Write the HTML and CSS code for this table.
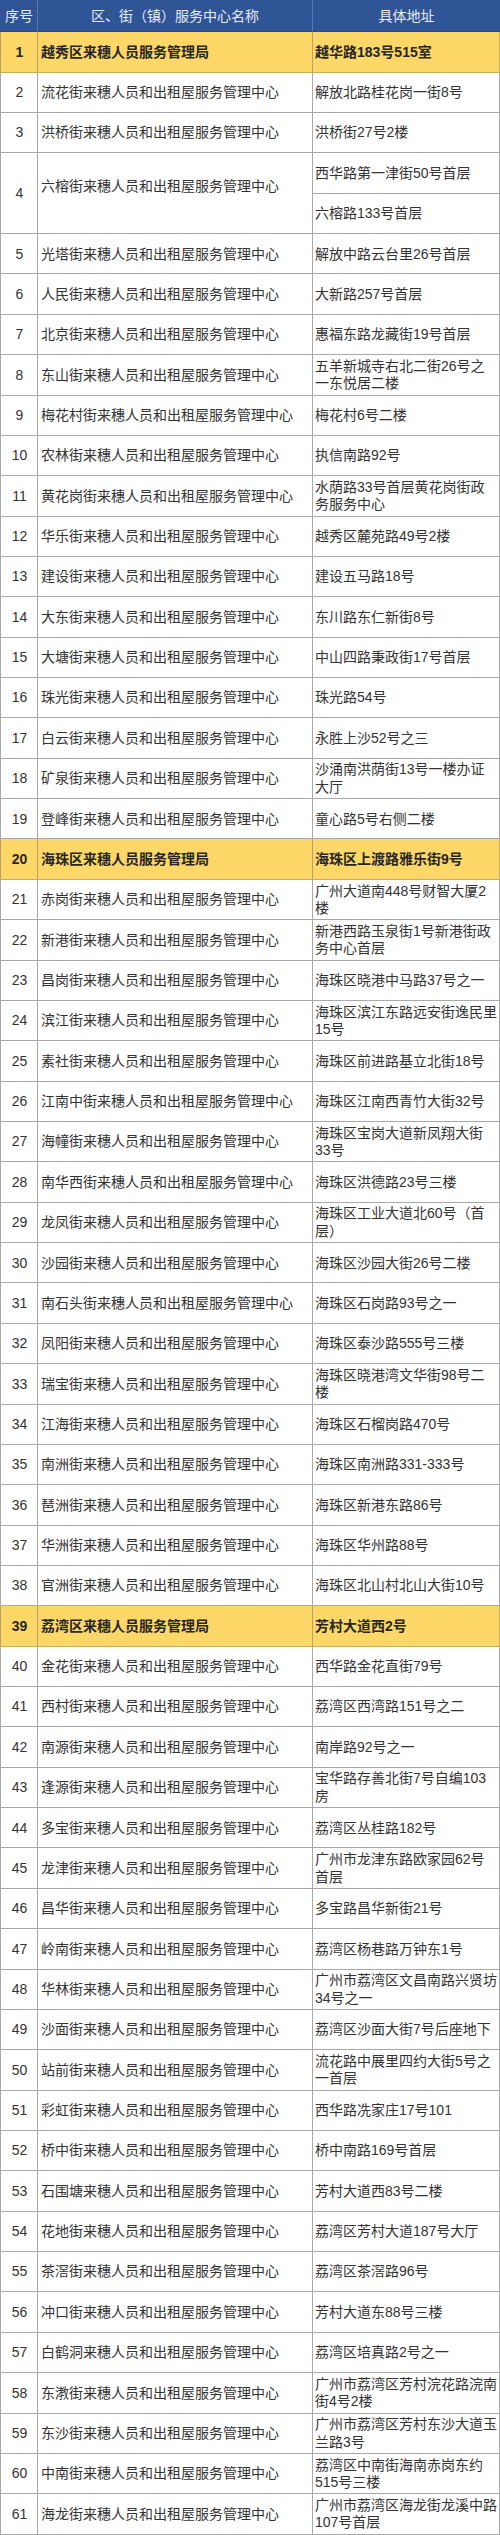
FILE: index.html
```html
<!DOCTYPE html>
<html lang="zh-CN">
<head>
<meta charset="utf-8">
<title>来穗人员服务管理中心地址</title>
<link rel="stylesheet" href="styles.css">
</head>
<body>
<div class="sheet">
  <div class="cell head c1">序号</div><div class="cell head c2">区、街（镇）服务中心名称</div><div class="cell head c3">具体地址</div>

  <div class="cell num hl">1</div><div class="cell name hl">越秀区来穗人员服务管理局</div><div class="cell addr hl">越华路183号515室</div>
  <div class="cell num">2</div><div class="cell name">流花街来穗人员和出租屋服务管理中心</div><div class="cell addr">解放北路桂花岗一街8号</div>
  <div class="cell num">3</div><div class="cell name">洪桥街来穗人员和出租屋服务管理中心</div><div class="cell addr">洪桥街27号2楼</div>
  <div class="cell num span2">4</div><div class="cell name span2 raised">六榕街来穗人员和出租屋服务管理中心</div><div class="cell addr">西华路第一津街50号首层</div><div class="cell addr">六榕路133号首层</div>
  <div class="cell num">5</div><div class="cell name">光塔街来穗人员和出租屋服务管理中心</div><div class="cell addr">解放中路云台里26号首层</div>
  <div class="cell num">6</div><div class="cell name">人民街来穗人员和出租屋服务管理中心</div><div class="cell addr">大新路257号首层</div>
  <div class="cell num">7</div><div class="cell name">北京街来穗人员和出租屋服务管理中心</div><div class="cell addr">惠福东路龙藏街19号首层</div>
  <div class="cell num">8</div><div class="cell name">东山街来穗人员和出租屋服务管理中心</div><div class="cell addr">五羊新城寺右北二街26号之一东悦居二楼</div>
  <div class="cell num">9</div><div class="cell name">梅花村街来穗人员和出租屋服务管理中心</div><div class="cell addr">梅花村6号二楼</div>
  <div class="cell num">10</div><div class="cell name">农林街来穗人员和出租屋服务管理中心</div><div class="cell addr">执信南路92号</div>
  <div class="cell num">11</div><div class="cell name">黄花岗街来穗人员和出租屋服务管理中心</div><div class="cell addr">水荫路33号首层黄花岗街政务服务中心</div>
  <div class="cell num">12</div><div class="cell name">华乐街来穗人员和出租屋服务管理中心</div><div class="cell addr">越秀区麓苑路49号2楼</div>
  <div class="cell num">13</div><div class="cell name">建设街来穗人员和出租屋服务管理中心</div><div class="cell addr">建设五马路18号</div>
  <div class="cell num">14</div><div class="cell name">大东街来穗人员和出租屋服务管理中心</div><div class="cell addr">东川路东仁新街8号</div>
  <div class="cell num">15</div><div class="cell name">大塘街来穗人员和出租屋服务管理中心</div><div class="cell addr">中山四路秉政街17号首层</div>
  <div class="cell num">16</div><div class="cell name">珠光街来穗人员和出租屋服务管理中心</div><div class="cell addr">珠光路54号</div>
  <div class="cell num">17</div><div class="cell name">白云街来穗人员和出租屋服务管理中心</div><div class="cell addr">永胜上沙52号之三</div>
  <div class="cell num">18</div><div class="cell name">矿泉街来穗人员和出租屋服务管理中心</div><div class="cell addr">沙涌南洪荫街13号一楼办证大厅</div>
  <div class="cell num">19</div><div class="cell name">登峰街来穗人员和出租屋服务管理中心</div><div class="cell addr">童心路5号右侧二楼</div>
  <div class="cell num hl">20</div><div class="cell name hl">海珠区来穗人员服务管理局</div><div class="cell addr hl">海珠区上渡路雅乐街9号</div>
  <div class="cell num">21</div><div class="cell name">赤岗街来穗人员和出租屋服务管理中心</div><div class="cell addr">广州大道南448号财智大厦2楼</div>
  <div class="cell num">22</div><div class="cell name">新港街来穗人员和出租屋服务管理中心</div><div class="cell addr">新港西路玉泉街1号新港街政务中心首层</div>
  <div class="cell num">23</div><div class="cell name">昌岗街来穗人员和出租屋服务管理中心</div><div class="cell addr">海珠区晓港中马路37号之一</div>
  <div class="cell num">24</div><div class="cell name">滨江街来穗人员和出租屋服务管理中心</div><div class="cell addr">海珠区滨江东路远安街逸民里15号</div>
  <div class="cell num">25</div><div class="cell name">素社街来穗人员和出租屋服务管理中心</div><div class="cell addr">海珠区前进路基立北街18号</div>
  <div class="cell num">26</div><div class="cell name">江南中街来穗人员和出租屋服务管理中心</div><div class="cell addr">海珠区江南西青竹大街32号</div>
  <div class="cell num">27</div><div class="cell name">海幢街来穗人员和出租屋服务管理中心</div><div class="cell addr">海珠区宝岗大道新凤翔大街33号</div>
  <div class="cell num">28</div><div class="cell name">南华西街来穗人员和出租屋服务管理中心</div><div class="cell addr">海珠区洪德路23号三楼</div>
  <div class="cell num">29</div><div class="cell name">龙凤街来穗人员和出租屋服务管理中心</div><div class="cell addr">海珠区工业大道北60号（首层）</div>
  <div class="cell num">30</div><div class="cell name">沙园街来穗人员和出租屋服务管理中心</div><div class="cell addr">海珠区沙园大街26号二楼</div>
  <div class="cell num">31</div><div class="cell name">南石头街来穗人员和出租屋服务管理中心</div><div class="cell addr">海珠区石岗路93号之一</div>
  <div class="cell num">32</div><div class="cell name">凤阳街来穗人员和出租屋服务管理中心</div><div class="cell addr">海珠区泰沙路555号三楼</div>
  <div class="cell num">33</div><div class="cell name">瑞宝街来穗人员和出租屋服务管理中心</div><div class="cell addr">海珠区晓港湾文华街98号二楼</div>
  <div class="cell num">34</div><div class="cell name">江海街来穗人员和出租屋服务管理中心</div><div class="cell addr">海珠区石榴岗路470号</div>
  <div class="cell num">35</div><div class="cell name">南洲街来穗人员和出租屋服务管理中心</div><div class="cell addr">海珠区南洲路331-333号</div>
  <div class="cell num">36</div><div class="cell name">琶洲街来穗人员和出租屋服务管理中心</div><div class="cell addr">海珠区新港东路86号</div>
  <div class="cell num">37</div><div class="cell name">华洲街来穗人员和出租屋服务管理中心</div><div class="cell addr">海珠区华州路88号</div>
  <div class="cell num">38</div><div class="cell name">官洲街来穗人员和出租屋服务管理中心</div><div class="cell addr">海珠区北山村北山大街10号</div>
  <div class="cell num hl">39</div><div class="cell name hl">荔湾区来穗人员服务管理局</div><div class="cell addr hl">芳村大道西2号</div>
  <div class="cell num">40</div><div class="cell name">金花街来穗人员和出租屋服务管理中心</div><div class="cell addr">西华路金花直街79号</div>
  <div class="cell num">41</div><div class="cell name">西村街来穗人员和出租屋服务管理中心</div><div class="cell addr">荔湾区西湾路151号之二</div>
  <div class="cell num">42</div><div class="cell name">南源街来穗人员和出租屋服务管理中心</div><div class="cell addr">南岸路92号之一</div>
  <div class="cell num">43</div><div class="cell name">逢源街来穗人员和出租屋服务管理中心</div><div class="cell addr">宝华路存善北街7号自编103房</div>
  <div class="cell num">44</div><div class="cell name">多宝街来穗人员和出租屋服务管理中心</div><div class="cell addr">荔湾区丛桂路182号</div>
  <div class="cell num">45</div><div class="cell name">龙津街来穗人员和出租屋服务管理中心</div><div class="cell addr">广州市龙津东路欧家园62号首层</div>
  <div class="cell num">46</div><div class="cell name">昌华街来穗人员和出租屋服务管理中心</div><div class="cell addr">多宝路昌华新街21号</div>
  <div class="cell num">47</div><div class="cell name">岭南街来穗人员和出租屋服务管理中心</div><div class="cell addr">荔湾区杨巷路万钟东1号</div>
  <div class="cell num">48</div><div class="cell name">华林街来穗人员和出租屋服务管理中心</div><div class="cell addr">广州市荔湾区文昌南路兴贤坊34号之一</div>
  <div class="cell num">49</div><div class="cell name">沙面街来穗人员和出租屋服务管理中心</div><div class="cell addr">荔湾区沙面大街7号后座地下</div>
  <div class="cell num">50</div><div class="cell name">站前街来穗人员和出租屋服务管理中心</div><div class="cell addr">流花路中展里四约大街5号之一首层</div>
  <div class="cell num">51</div><div class="cell name">彩虹街来穗人员和出租屋服务管理中心</div><div class="cell addr">西华路冼家庄17号101</div>
  <div class="cell num">52</div><div class="cell name">桥中街来穗人员和出租屋服务管理中心</div><div class="cell addr">桥中南路169号首层</div>
  <div class="cell num">53</div><div class="cell name">石围塘来穗人员和出租屋服务管理中心</div><div class="cell addr">芳村大道西83号二楼</div>
  <div class="cell num">54</div><div class="cell name">花地街来穗人员和出租屋服务管理中心</div><div class="cell addr">荔湾区芳村大道187号大厅</div>
  <div class="cell num">55</div><div class="cell name">茶滘街来穗人员和出租屋服务管理中心</div><div class="cell addr">荔湾区茶滘路96号</div>
  <div class="cell num">56</div><div class="cell name">冲口街来穗人员和出租屋服务管理中心</div><div class="cell addr">芳村大道东88号三楼</div>
  <div class="cell num">57</div><div class="cell name">白鹤洞来穗人员和出租屋服务管理中心</div><div class="cell addr">荔湾区培真路2号之一</div>
  <div class="cell num">58</div><div class="cell name">东漖街来穗人员和出租屋服务管理中心</div><div class="cell addr">广州市荔湾区芳村浣花路浣南街4号2楼</div>
  <div class="cell num">59</div><div class="cell name">东沙街来穗人员和出租屋服务管理中心</div><div class="cell addr">广州市荔湾区芳村东沙大道玉兰路3号</div>
  <div class="cell num">60</div><div class="cell name">中南街来穗人员和出租屋服务管理中心</div><div class="cell addr">荔湾区中南街海南赤岗东约515号三楼</div>
  <div class="cell num">61</div><div class="cell name">海龙街来穗人员和出租屋服务管理中心</div><div class="cell addr">广州市荔湾区海龙街龙溪中路107号首层</div>
</div>
</body>
</html>
```

FILE: styles.css
```css
html, body {
  margin: 0;
  padding: 0;
  background: #ffffff;
}

body {
  font-family: "Liberation Sans", "Noto Sans CJK SC", sans-serif;
  font-size: 14px;
  line-height: 17.5px;
  color: #333333;
}

.sheet {
  display: grid;
  width: 500px;
  grid-template-columns: 37px 275px 188px;
  grid-template-rows: 32.3px;
  grid-auto-rows: 40.365px;
}

.cell {
  box-sizing: border-box;
  display: flex;
  align-items: center;
  min-width: 0;
  border-left: 1px solid #a9a9a9;
  border-bottom: 1px solid #a9a9a9;
  padding-top: 1px;
}

.head {
  justify-content: center;
  background: #2f5597;
  color: #e6ebf4;
  border-left-color: #5a78ad;
  border-bottom-color: #2a4a82;
  padding-top: 2px;
}

.head.c1 {
  border-left-color: #2f5597;
}

.num {
  grid-column: 1;
  justify-content: center;
  padding-left: 1px;
}

.name {
  grid-column: 2;
  padding-left: 3px;
  padding-right: 2px;
}

.addr {
  grid-column: 3;
  padding-left: 2px;
  padding-right: 1.5px;
  border-right: 1px solid #a9a9a9;
}

.span2 {
  grid-row: span 2;
}

.raised {
  padding-bottom: 14px;
}

.hl {
  background: #fdd869;
  font-weight: 700;
  color: #262626;
  border-bottom-color: #c9ad5e;
  border-left-color: #b8a36a;
}

.addr.hl {
  border-right-color: #c9ad5e;
}
```
